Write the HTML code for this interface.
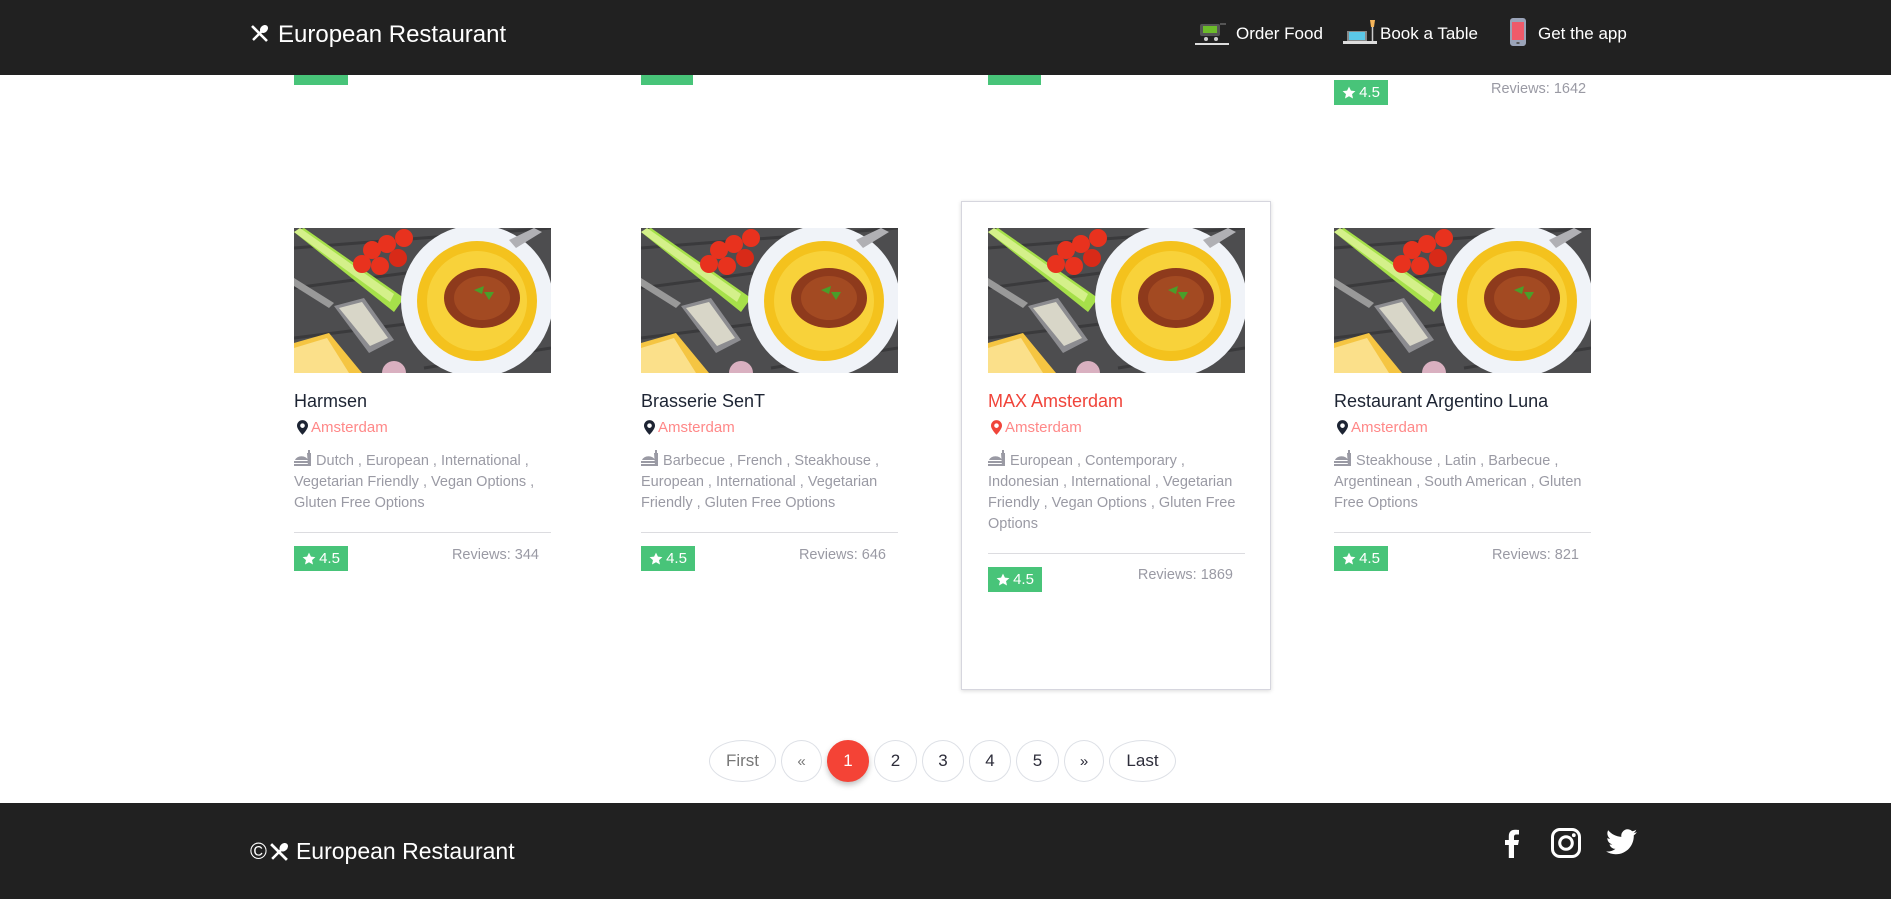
<!DOCTYPE html>
<html><head><meta charset="utf-8">
<style>
*{margin:0;padding:0;box-sizing:border-box}
body{width:1891px;height:899px;position:relative;overflow:hidden;background:#fff;font-family:"Liberation Sans",Arial,sans-serif}
.abs{position:absolute}
.hdr{left:0;top:0;width:1891px;height:75px;background:#212121}
.ftr{left:0;top:803px;width:1891px;height:96px;background:#212121}
.nav{color:#fff;font-size:17px;top:24px}
.card{width:257px}
.title{font-size:18px;color:#1d2433;position:absolute;top:391px;left:0;white-space:nowrap}
.loc{position:absolute;top:419px;left:3px;font-size:15px;color:#f88;display:flex;align-items:center;gap:3px}
.cui{position:absolute;top:450px;left:0;width:257px;font-size:14.5px;line-height:21px;color:#9a9aa4}
.div{position:absolute;left:0;width:257px;height:1px;background:#dcdce0}
.badge{position:absolute;left:0;width:54px;height:25px;background:#48c479;color:#fff;font-size:15px;display:flex;align-items:center;justify-content:center;gap:3px}
.rev{position:absolute;right:12px;font-size:14.5px;color:#9a9aa4}
.pg{position:absolute;top:740px;height:42px;border:1px solid #dde0e6;border-radius:50%;display:flex;align-items:center;justify-content:center;font-size:17px;color:#2d2d3a;background:#fff}
</style></head><body>
<svg width="0" height="0" style="position:absolute">
<defs>
<symbol id="food" viewBox="0 0 257 145">
<rect width="257" height="145" fill="#4d4d4f"/>
<path d="M0 20 L257 0 M0 60 L150 40 M0 110 L120 95 M130 140 L257 120" stroke="#3a3a3c" stroke-width="3"/>
<polygon points="0,4 10,0 110,70 100,84" fill="#a6e04a"/>
<polygon points="0,4 6,0 100,66 96,74" fill="#d4f08a"/>
<circle cx="78" cy="22" r="9" fill="#e8321e"/><circle cx="93" cy="16" r="9" fill="#e8321e"/><circle cx="110" cy="10" r="9" fill="#e8321e"/><circle cx="68" cy="36" r="9" fill="#e8321e"/><circle cx="86" cy="38" r="9" fill="#e8321e"/><circle cx="104" cy="30" r="9" fill="#d82a18"/>
<polygon points="0,50 40,75 35,80 0,58" fill="#999"/>
<polygon points="40,78 70,70 100,112 75,125" fill="#8c8c90"/>
<polygon points="45,80 68,74 94,110 76,118" fill="#d8d6c8"/>
<polygon points="0,115 35,105 68,145 0,145" fill="#f5c542"/>
<polygon points="0,120 33,110 55,145 0,145" fill="#fbe08a"/>
<circle cx="100" cy="145" r="12" fill="#d9b0c0"/>
<circle cx="183" cy="73" r="76" fill="#f0f3f8"/>
<circle cx="183" cy="73" r="60" fill="#f4c21d"/>
<circle cx="183" cy="73" r="50" fill="#f8d23a"/>
<ellipse cx="188" cy="70" rx="38" ry="30" fill="#8e3a1c"/>
<ellipse cx="188" cy="70" rx="28" ry="22" fill="#a34a22"/>
<path d="M180 62 l10 -4 l-2 8z M190 64 l10 0 l-5 8z" fill="#4a9e2a"/>
<polygon points="215,12 240,0 248,4 222,20" fill="#b0b0b4"/>
</symbol>
<symbol id="pin" viewBox="0 0 12 16"><path d="M6 0a6 6 0 0 1 6 6c0 4-6 10-6 10S0 10 0 6a6 6 0 0 1 6-6zm0 3.5a2.5 2.5 0 1 0 0 5a2.5 2.5 0 0 0 0-5z"/></symbol>
<symbol id="dish" viewBox="0 0 18 16"><path d="M1 10a7 6 0 0 1 13 0z M0 11h15v2H0z M0 14h15v2H0z M13 3h4v13h-3z M14 0h2v3h-2z"/></symbol>
<symbol id="star" viewBox="0 0 24 24"><path d="M12 1l3.3 7 7.7.8-5.8 5.1 1.7 7.6L12 17.6l-6.9 3.9 1.7-7.6L1 8.8l7.7-.8z" fill="#fff"/></symbol>
</defs></svg>

<div class="abs" style="left:294px;top:60px;width:54px;height:25px;background:#48c479"></div>
<div class="abs" style="left:641px;top:60px;width:52px;height:25px;background:#48c479"></div>
<div class="abs" style="left:988px;top:60px;width:53px;height:25px;background:#48c479"></div>
<div class="badge" style="left:1334px;top:80px"><svg width="14" height="14"><use href="#star"/></svg>4.5</div>
<div class="abs" style="left:1491px;top:81px;font-size:14.5px;color:#9a9aa4">Reviews: 1642</div>

<div class="abs hdr"></div>
<svg class="abs" style="left:250px;top:24px" width="19" height="19" viewBox="0 0 19 19"><path d="M2 2 L17 17" stroke="#fff" stroke-width="2.6"/><path d="M16 3 L3 16" stroke="#fff" stroke-width="2.4"/><ellipse cx="14" cy="5" rx="3.5" ry="4.5" fill="#fff" transform="rotate(45 14 5)"/></svg>
<div class="abs" style="left:278px;top:21px;color:#fff;font-size:24px">European Restaurant</div>

<svg class="abs" style="left:1195px;top:18px" width="34" height="28" viewBox="0 0 34 28"><rect x="5" y="6" width="20" height="12" rx="2" fill="#555"/><rect x="8" y="8" width="14" height="7" fill="#6cbb2a"/><path d="M25 6 h6" stroke="#555" stroke-width="2"/><circle cx="11" cy="21" r="2" fill="#ccc"/><circle cx="21" cy="21" r="2" fill="#ccc"/><rect x="0" y="25" width="34" height="2" fill="#ddd"/></svg>
<div class="abs nav" style="left:1236px">Order Food</div>
<svg class="abs" style="left:1343px;top:18px" width="34" height="28" viewBox="0 0 34 28"><rect x="4" y="13" width="20" height="10" fill="#888"/><rect x="6" y="14" width="16" height="8" fill="#5bc8e8"/><rect x="0" y="23" width="34" height="3" fill="#ddd"/><path d="M27 2h5l-1 7h-3z" fill="#f5b55a"/><path d="M29.5 9v14" stroke="#ccc" stroke-width="1.5"/></svg>
<div class="abs nav" style="left:1380px">Book a Table</div>
<svg class="abs" style="left:1510px;top:18px" width="16" height="28" viewBox="0 0 16 28"><rect x="0" y="0" width="16" height="28" rx="3" fill="#9aa3b8"/><rect x="2" y="4" width="12" height="18" fill="#ef5a6a"/><rect x="6.5" y="24" width="3" height="2" fill="#555"/></svg>
<div class="abs nav" style="left:1538px">Get the app</div>

<div class="abs" style="left:961px;top:201px;width:310px;height:489px;border:1px solid #d6d6de;box-shadow:0 1px 4px rgba(0,0,0,.15)"></div>

<div class="abs card" style="left:294px;top:0;height:899px">
<svg class="abs" style="left:0;top:228px" width="257" height="145"><use href="#food"/></svg>
<div class="title">Harmsen</div>
<div class="loc"><svg width="11" height="15" fill="#1d2433"><use href="#pin"/></svg>Amsterdam</div>
<div class="cui"><svg width="18" height="16" fill="#9a9aa4" style="vertical-align:-1px"><use href="#dish"/></svg> Dutch , European , International , Vegetarian Friendly , Vegan Options , Gluten Free Options</div>
<div class="div" style="top:532px"></div>
<div class="badge" style="top:546px"><svg width="14" height="14"><use href="#star"/></svg>4.5</div>
<div class="rev" style="top:547px">Reviews: 344</div>
</div>

<div class="abs card" style="left:641px;top:0;height:899px">
<svg class="abs" style="left:0;top:228px" width="257" height="145"><use href="#food"/></svg>
<div class="title">Brasserie SenT</div>
<div class="loc"><svg width="11" height="15" fill="#1d2433"><use href="#pin"/></svg>Amsterdam</div>
<div class="cui"><svg width="18" height="16" fill="#9a9aa4" style="vertical-align:-1px"><use href="#dish"/></svg> Barbecue , French , Steakhouse , European , International , Vegetarian Friendly , Gluten Free Options</div>
<div class="div" style="top:532px"></div>
<div class="badge" style="top:546px"><svg width="14" height="14"><use href="#star"/></svg>4.5</div>
<div class="rev" style="top:547px">Reviews: 646</div>
</div>

<div class="abs card" style="left:988px;top:0;height:899px">
<svg class="abs" style="left:0;top:228px" width="257" height="145"><use href="#food"/></svg>
<div class="title" style="color:#f0443a">MAX Amsterdam</div>
<div class="loc"><svg width="11" height="15" fill="#f0443a"><use href="#pin"/></svg>Amsterdam</div>
<div class="cui"><svg width="18" height="16" fill="#9a9aa4" style="vertical-align:-1px"><use href="#dish"/></svg> European , Contemporary , Indonesian , International , Vegetarian Friendly , Vegan Options , Gluten Free Options</div>
<div class="div" style="top:553px"></div>
<div class="badge" style="top:567px"><svg width="14" height="14"><use href="#star"/></svg>4.5</div>
<div class="rev" style="top:567px">Reviews: 1869</div>
</div>

<div class="abs card" style="left:1334px;top:0;height:899px">
<svg class="abs" style="left:0;top:228px" width="257" height="145"><use href="#food"/></svg>
<div class="title">Restaurant Argentino Luna</div>
<div class="loc"><svg width="11" height="15" fill="#1d2433"><use href="#pin"/></svg>Amsterdam</div>
<div class="cui"><svg width="18" height="16" fill="#9a9aa4" style="vertical-align:-1px"><use href="#dish"/></svg> Steakhouse , Latin , Barbecue , Argentinean , South American , Gluten Free Options</div>
<div class="div" style="top:532px"></div>
<div class="badge" style="top:546px"><svg width="14" height="14"><use href="#star"/></svg>4.5</div>
<div class="rev" style="top:547px">Reviews: 821</div>
</div>

<div class="pg" style="left:709px;width:67px;color:#777">First</div>
<div class="pg" style="left:781px;width:41px;color:#777;font-size:15px">«</div>
<div class="pg" style="left:827px;width:42px;background:#f44336;border-color:#f44336;color:#fff;box-shadow:0 3px 6px rgba(0,0,0,.25)">1</div>
<div class="pg" style="left:874px;width:43px">2</div>
<div class="pg" style="left:922px;width:42px">3</div>
<div class="pg" style="left:969px;width:42px">4</div>
<div class="pg" style="left:1016px;width:43px">5</div>
<div class="pg" style="left:1064px;width:40px;font-size:15px">»</div>
<div class="pg" style="left:1109px;width:67px">Last</div>

<div class="abs ftr"></div>
<div class="abs" style="left:250px;top:838px;color:#fff;font-size:23px;display:flex;align-items:center">©<svg width="20" height="20" viewBox="0 0 19 19" style="margin:0 7px 0 2px"><path d="M2 2 L17 17" stroke="#fff" stroke-width="2.6"/><path d="M16 3 L3 16" stroke="#fff" stroke-width="2.4"/><ellipse cx="14" cy="5" rx="3.5" ry="4.5" fill="#fff" transform="rotate(45 14 5)"/></svg>European Restaurant</div>
<svg class="abs" style="left:1503px;top:828px" width="17" height="30" viewBox="0 0 17 30"><path d="M11 30V17h4l1-5h-5V9c0-1.5.5-2.5 2.6-2.5H16V2C15.4 2 13.8 1.8 12 1.8 8.2 1.8 5.8 4 5.8 8.2V12H2v5h3.8v13z" fill="#fff"/></svg>
<svg class="abs" style="left:1551px;top:828px" width="30" height="30" viewBox="0 0 30 30"><rect x="1.5" y="1.5" width="27" height="27" rx="7.5" fill="none" stroke="#fff" stroke-width="3"/><circle cx="15" cy="15" r="6.3" fill="none" stroke="#fff" stroke-width="3"/><circle cx="22.8" cy="7.2" r="1.9" fill="#fff"/></svg>
<svg class="abs" style="left:1606px;top:828px" width="31" height="28" viewBox="0 0 24 20"><path d="M24 2.4c-.9.4-1.8.6-2.8.8 1-.6 1.8-1.6 2.2-2.7-1 .6-2 1-3.1 1.2A4.9 4.9 0 0 0 11.9 6C7.8 5.8 4.2 3.9 1.7.9c-1.3 2.3-.6 5.1 1.5 6.6-.8 0-1.6-.2-2.2-.6 0 2.4 1.7 4.4 3.9 4.9-.7.2-1.5.2-2.2.1.6 2 2.4 3.4 4.6 3.4A9.9 9.9 0 0 1 0 17.3 14 14 0 0 0 7.5 19.5c9.1 0 14.3-7.7 14-14.6 1-.7 1.8-1.5 2.5-2.5z" fill="#fff"/></svg>
</body></html>
